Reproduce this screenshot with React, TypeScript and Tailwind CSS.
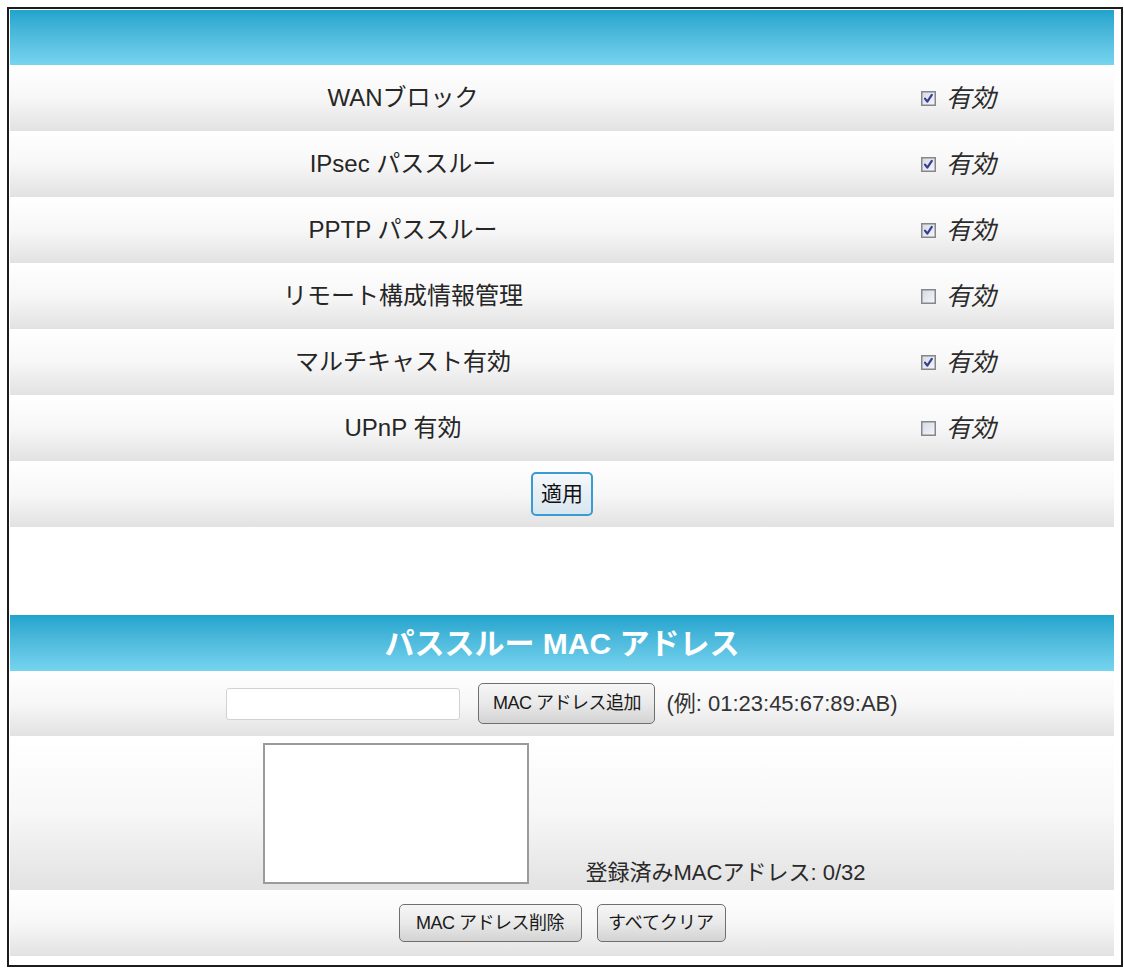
import React from "react";

// ─── Data ────────────────────────────────────────────────────────────────────

const settings: { label: string; checked: boolean }[] = [
  { label: "WANブロック", checked: true },
  { label: "IPsec パススルー", checked: true },
  { label: "PPTP パススルー", checked: true },
  { label: "リモート構成情報管理", checked: false },
  { label: "マルチキャスト有効", checked: true },
  { label: "UPnP 有効", checked: false },
];

const rowBg = "bg-linear-to-b from-white via-[#f7f7f7] to-[#e2e2e2]";
const headBg = "bg-linear-to-b from-[#1fa4cd] to-[#76d4ef]";

// ─── Sub-components ──────────────────────────────────────────────────────────

function CheckBox({ checked }: { checked: boolean }) {
  return (
    <svg width="15" height="15" viewBox="0 0 15 15" className="shrink-0">
      <defs>
        <linearGradient id="cbfill" x1="0" y1="0" x2="1" y2="1">
          <stop offset="0" stopColor="#d6d9e4" />
          <stop offset="1" stopColor="#f6f7fb" />
        </linearGradient>
      </defs>
      <rect x="0.75" y="0.75" width="13.5" height="13.5" fill="url(#cbfill)" stroke="#85878a" strokeWidth="1.5" />
      {checked && (
        <path
          d="M4 7.6 L6.3 10.6 L10.8 3.8"
          stroke="#363f93"
          strokeWidth="2.2"
          fill="none"
          strokeLinecap="round"
          strokeLinejoin="round"
        />
      )}
    </svg>
  );
}

function LegacyButton({
  children,
  className = "",
}: {
  children: React.ReactNode;
  className?: string;
}) {
  return (
    <button
      className={
        "flex items-center justify-center rounded-[5px] border border-[#6f6f6f] bg-linear-to-b from-[#f6f6f6] via-[#e9e9e9] to-[#d3d3d3] text-[#1a1a1a] " +
        className
      }
    >
      {children}
    </button>
  );
}

function SettingRow({ label, checked }: { label: string; checked: boolean }) {
  return (
    <div className={`flex h-[66px] items-center ${rowBg}`}>
      <div className="w-[786px] text-center text-[24px] text-[#262626]">{label}</div>
      <div className="flex items-center gap-[10px] pl-[125px]">
        <CheckBox checked={checked} />
        <span className="text-[25px] leading-none italic text-[#2a2a2a]">有効</span>
      </div>
    </div>
  );
}

// ─── Page ────────────────────────────────────────────────────────────────────

export default function App() {
  return (
    <div
      className="min-h-[970px] w-[1124px] bg-white pl-[7px] pt-[7px]"
      style={{ fontFamily: '"Liberation Sans", "Noto Sans CJK JP", sans-serif' }}
    >
      <div className="h-[960px] w-[1116px] border-2 border-[#1c1c1c] pl-px pt-px">
        <div className="w-[1104px]">
          {/* ── Settings header ── */}
          <div className={`h-[55px] ${headBg}`} />

          {settings.map((s) => (
            <SettingRow key={s.label} label={s.label} checked={s.checked} />
          ))}

          {/* ── Apply ── */}
          <div className={`flex h-[66px] items-center justify-center ${rowBg}`}>
            <button className="flex h-[44px] w-[62px] items-center justify-center rounded-[5px] border-2 border-[#3a9bd2] bg-linear-to-b from-[#f4f8fb] to-[#d9e6ee] text-[21px] text-[#111]">
              適用
            </button>
          </div>

          <div className="h-[88px] bg-white" />

          {/* ── Passthrough MAC header ── */}
          <div className={`flex h-[56px] items-center justify-center ${headBg}`}>
            <span className="text-[30px] font-bold text-white">パススルー MAC アドレス</span>
          </div>

          {/* ── Add MAC ── */}
          <div className={`flex h-[65px] items-center justify-center ${rowBg}`}>
            <input
              type="text"
              className="h-[32px] w-[234px] rounded-[3px] border border-[#d2d2d2] bg-white"
            />
            <LegacyButton className="ml-[18px] h-[41px] w-[177px] text-[18px] tracking-[-0.5px]">
              MAC アドレス追加
            </LegacyButton>
            <span className="ml-[11px] text-[22px] text-[#333]">(例: 01:23:45:67:89:AB)</span>
          </div>

          {/* ── MAC list ── */}
          <div className={`flex h-[154px] items-end justify-center pb-[6px] pl-[4px] pt-[7px] ${rowBg}`}>
            <textarea className="h-[141px] w-[266px] resize-none border-2 border-[#9b9b9b] bg-white" />
            <span className="ml-[57px] text-[22px] leading-none text-[#2a2a2a]">
              登録済みMACアドレス: 0/32
            </span>
          </div>

          {/* ── Remove / Clear ── */}
          <div className={`flex h-[66px] items-center justify-center gap-[15px] ${rowBg}`}>
            <LegacyButton className="h-[38px] w-[183px] text-[18px] tracking-[-0.5px]">
              MAC アドレス削除
            </LegacyButton>
            <LegacyButton className="h-[38px] w-[129px] text-[18px]">すべてクリア</LegacyButton>
          </div>
        </div>
      </div>
    </div>
  );
}
